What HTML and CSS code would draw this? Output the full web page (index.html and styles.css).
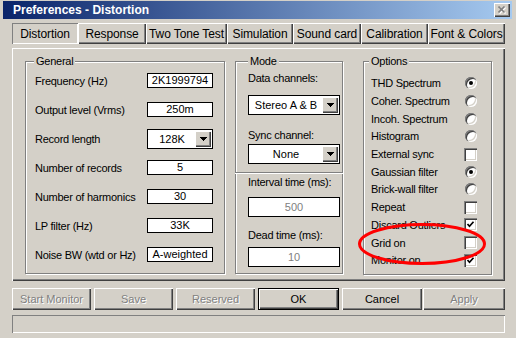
FILE: index.html
```html
<!DOCTYPE html>
<html lang="en">
<head>
    <meta charset="UTF-8">
    <meta name="viewport" content="width=device-width, initial-scale=1.0">
    <title>Preferences - Distortion</title>
    <link rel="stylesheet" href="styles.css">
</head>
<body>
    <div class="window">
        <div class="titlebar">
            <span class="title">Preferences - Distortion</span>
            <span class="close">
                <svg width="9" height="8" viewBox="0 0 9 8">
                    <path d="M1.5 1.5l6 6M7.5 1.5l-6 6" stroke="#fff" stroke-width="1.6"/>
                    <path d="M0.5 0.5l6 6M6.5 0.5l-6 6" stroke="#808080" stroke-width="1.6"/>
                </svg>
            </span>
        </div>

        <div class="content">
            <div class="tabs">
                <div class="tab active">Distortion</div>
                <div class="tab">Response</div>
                <div class="tab">Two Tone Test</div>
                <div class="tab">Simulation</div>
                <div class="tab">Sound card</div>
                <div class="tab">Calibration</div>
                <div class="tab">Font &amp; Colors</div>
            </div>

            <div class="panel">
                <div class="group general">
                    <span class="legend">General</span>
                    <div class="field"><span>Frequency (Hz)</span><span class="edit">2K1999794</span></div>
                    <div class="field"><span>Output level (Vrms)</span><span class="edit">250m</span></div>
                    <div class="field">
                        <span>Record length</span>
                        <span class="combo short"><span class="value">128K</span><span class="drop"><svg width="7" height="4" viewBox="0 0 7 4"><path d="M0 0h7v1h-1v1h-1v1h-1v1h-1v-1h-1v-1h-1v-1h-1z"/></svg></span></span>
                    </div>
                    <div class="field"><span>Number of records</span><span class="edit">5</span></div>
                    <div class="field"><span>Number of harmonics</span><span class="edit">30</span></div>
                    <div class="field"><span>LP filter (Hz)</span><span class="edit">33K</span></div>
                    <div class="field"><span>Noise BW (wtd or Hz)</span><span class="edit">A-weighted</span></div>
                </div>

                <div class="group mode">
                    <span class="legend">Mode</span>
                    <div class="caption first">Data channels:</div>
                    <span class="combo wide data"><span class="value">Stereo A &amp; B</span><span class="drop"><svg width="7" height="4" viewBox="0 0 7 4"><path d="M0 0h7v1h-1v1h-1v1h-1v1h-1v-1h-1v-1h-1v-1h-1z"/></svg></span></span>
                    <div class="caption sync">Sync channel:</div>
                    <span class="combo wide"><span class="value">None</span><span class="drop"><svg width="7" height="4" viewBox="0 0 7 4"><path d="M0 0h7v1h-1v1h-1v1h-1v1h-1v-1h-1v-1h-1v-1h-1z"/></svg></span></span>
                    <div class="separator"></div>
                    <div class="caption interval">Interval time (ms):</div>
                    <span class="edit wide disabled interval-box">500</span>
                    <div class="caption dead">Dead time (ms):</div>
                    <span class="edit wide disabled dead-box">10</span>
                </div>

                <div class="group options">
                    <span class="legend">Options</span>
                    <div class="opt"><span>THD Spectrum</span><span class="mark"><span class="radio on"></span></span></div>
                    <div class="opt"><span>Coher. Spectrum</span><span class="mark"><span class="radio"></span></span></div>
                    <div class="opt"><span>Incoh. Spectrum</span><span class="mark"><span class="radio"></span></span></div>
                    <div class="opt"><span>Histogram</span><span class="mark"><span class="radio"></span></span></div>
                    <div class="opt"><span>External sync</span><span class="mark"><span class="check"></span></span></div>
                    <div class="opt"><span>Gaussian filter</span><span class="mark"><span class="radio on"></span></span></div>
                    <div class="opt"><span>Brick-wall filter</span><span class="mark"><span class="radio"></span></span></div>
                    <div class="opt"><span>Repeat</span><span class="mark"><span class="check"></span></span></div>
                    <div class="opt"><span>Discard Outliers</span><span class="mark"><span class="check"><svg width="9" height="9" viewBox="0 0 9 9"><path d="M1.5 4l2 2.2 4-4.4" fill="none" stroke="#000" stroke-width="1.7"/></svg></span></span></div>
                    <div class="opt"><span>Grid on</span><span class="mark"><span class="check"></span></span></div>
                    <div class="opt"><span>Monitor on</span><span class="mark"><span class="check"><svg width="9" height="9" viewBox="0 0 9 9"><path d="M1.5 4l2 2.2 4-4.4" fill="none" stroke="#000" stroke-width="1.7"/></svg></span></span></div>
                </div>
            </div>

            <div class="actions">
                <div class="btn disabled">Start Monitor</div>
                <div class="btn disabled">Save</div>
                <div class="btn disabled">Reserved</div>
                <div class="btn default">OK</div>
                <div class="btn">Cancel</div>
                <div class="btn disabled apply">Apply</div>
            </div>

            <div class="status"></div>
        </div>

        <!-- red marker drawn over the "Grid on" row -->
        <svg class="highlight" width="134" height="46" viewBox="0 0 134 46">
            <ellipse cx="66" cy="23" rx="62.5" ry="19.5" fill="none" stroke="#f00" stroke-width="3"/>
        </svg>
    </div>
</body>
</html>
```

FILE: styles.css
```css
* {
    margin: 0;
    padding: 0;
    box-sizing: border-box;
}

body {
    background: #d4d0c8;
    font-family: 'Liberation Sans', Arial, sans-serif;
    font-size: 11px;
    color: #000;
}

.window {
    position: relative;
    width: 516px;
    height: 338px;
    padding: 1px 4px 0 3px;
    overflow: hidden;
}

.titlebar {
    height: 18px;
    display: flex;
    align-items: center;
    justify-content: space-between;
    padding: 0 2px 0 10px;
    background: linear-gradient(90deg, #0a246a, #a6caf0);
}

.title {
    color: #fff;
    font-weight: bold;
    font-size: 12px;
}

.close {
    width: 16px;
    height: 14px;
    display: flex;
    align-items: center;
    justify-content: center;
    background: #d4d0c8;
    box-shadow: inset 1px 1px #fff, inset -1px -1px #404040, inset -2px -2px #808080;
}

.content {
    padding: 0 7px 0 9px;
}

/* tab strip */
.tabs {
    display: flex;
    height: 21px;
    margin-top: 4px;
}

.tab {
    display: flex;
    align-items: center;
    justify-content: center;
    font-size: 12px;
    letter-spacing: -0.1px;
    white-space: nowrap;
    box-shadow: inset 1px 1px #fff, inset -1px -1px #404040, inset -2px -2px #808080;
}

.tab.active {
    box-shadow: inset 1px 1px #808080, inset -1px -1px #fff;
}

.tab:nth-child(1) { width: 66px; }
.tab:nth-child(2) { width: 68px; }
.tab:nth-child(3) { width: 81px; }
.tab:nth-child(4) { width: 66px; }
.tab:nth-child(5) { width: 68px; }
.tab:nth-child(6) { width: 67px; }
.tab:nth-child(7) { width: 77px; }

.panel {
    display: flex;
    align-items: flex-start;
    height: 233px;
    margin-top: 4px;
    padding: 13px 0 0 13px;
    box-shadow: inset 1px 1px #fff, inset -1px -1px #404040, inset -2px -2px #808080;
}

/* group boxes */
.group {
    position: relative;
    height: 213px;
    border: 1px solid #808080;
    box-shadow: inset 1px 1px #fff, 1px 1px #fff;
    letter-spacing: -0.25px;
}

.legend {
    position: absolute;
    top: -8px;
    left: 8px;
    padding: 0 2px;
    line-height: 14px;
    background: #d4d0c8;
}

.general {
    width: 200px;
    padding: 4px 11px 0 9px;
}

.mode {
    width: 108px;
    margin-left: 10px;
    padding: 8px 2px 0 12px;
}

.mode .legend {
    left: 12px;
}

.options {
    width: 129px;
    height: 214px;
    margin-left: 20px;
    padding: 12.5px 14px 0 7px;
}

.options .legend {
    left: 5px;
}

.field {
    display: flex;
    align-items: center;
    justify-content: space-between;
    height: 29px;
}

.edit {
    display: block;
    width: 66px;
    height: 15px;
    border: 1px solid #000;
    background: #fff;
    text-align: center;
    line-height: 13px;
    letter-spacing: 0;
}

.edit.wide {
    width: 92px;
    height: 20px;
    line-height: 18px;
}

.edit.disabled {
    color: #808080;
}

.combo {
    display: flex;
    align-items: center;
    height: 20px;
    border: 1px solid #000;
    background: #fff;
    padding: 1px;
    letter-spacing: 0;
}

.combo.short {
    width: 66px;
}

.combo.wide {
    width: 92px;
}

.combo .value {
    flex: 1;
    text-align: center;
}

.drop {
    width: 16px;
    height: 16px;
    display: flex;
    align-items: center;
    justify-content: center;
    background: #d4d0c8;
    box-shadow: inset 1px 1px #fff, inset -1px -1px #404040, inset -2px -2px #808080;
}

.caption {
    line-height: 14px;
}

.caption.first { margin-top: 1px; }
.combo.data { margin-top: 10px; }
.caption.sync { margin-top: 13px; }
.caption.sync + .combo { margin-top: 2px; }

.separator {
    height: 2px;
    margin: 8px -3px 0 -13px;
    border-top: 1px solid #808080;
    border-bottom: 1px solid #fff;
}

.caption.interval { margin-top: 1px; }
.interval-box { margin-top: 8px; }
.caption.dead { margin-top: 11px; }
.dead-box { margin-top: 5px; }

/* options list */
.opt {
    display: flex;
    align-items: center;
    justify-content: space-between;
    height: 17.7px;
}

.mark {
    width: 13px;
    display: flex;
    justify-content: center;
}

.radio {
    position: relative;
    width: 12px;
    height: 12px;
    border-radius: 50%;
    background: #fff;
    box-shadow: inset 1px 1px #808080, inset 2px 2px #404040, inset -1px -1px #fff, inset -2px -2px #d4d0c8;
}

.radio.on::after {
    content: '';
    position: absolute;
    top: 4px;
    left: 4px;
    width: 4px;
    height: 4px;
    border-radius: 50%;
    background: #000;
}

.check {
    width: 13px;
    height: 13px;
    display: flex;
    align-items: center;
    justify-content: center;
    background: #fff;
    box-shadow: inset 1px 1px #808080, inset 2px 2px #404040, inset -1px -1px #fff, inset -2px -2px #d4d0c8;
}

/* bottom buttons */
.actions {
    display: flex;
    gap: 3px;
    height: 22px;
    margin-top: 7px;
}

.btn {
    display: flex;
    align-items: center;
    justify-content: center;
    width: 79px;
    height: 22px;
    box-shadow: inset 1px 1px #fff, inset -1px -1px #404040, inset -2px -2px #808080;
}

.btn.disabled {
    color: #808080;
    text-shadow: 1px 1px 0 #fff;
}

.btn.default {
    width: 81px;
    border: 1px solid #000;
}

.btn:nth-child(5) {
    width: 80px;
}

.btn.apply {
    width: 82px;
    margin-left: -2px;
}

.status {
    height: 18px;
    margin-top: 5px;
    box-shadow: inset 1px 1px #808080, inset -1px -1px #fff;
}

.highlight {
    position: absolute;
    left: 356px;
    top: 221px;
}
```
